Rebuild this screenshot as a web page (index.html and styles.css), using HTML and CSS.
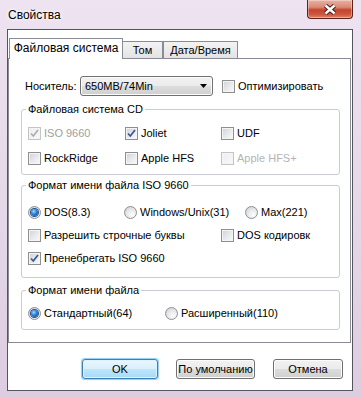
FILE: index.html
```html
<!DOCTYPE html>
<html lang="ru">
<head>
  <meta charset="UTF-8">
  <title>Свойства</title>
  <link rel="stylesheet" href="styles.css">
</head>
<body>

  <!-- Заголовок окна -->
  <div class="titlebar">
    <span class="title">Свойства</span>
    <div class="close">
      <svg width="14" height="11" viewBox="0 0 14 11">
        <path d="M2.5 1.5 L11.5 9.5 M11.5 1.5 L2.5 9.5" stroke="#4a1712" stroke-width="4.4"/>
        <path d="M2.5 1.5 L11.5 9.5 M11.5 1.5 L2.5 9.5" stroke="#fff" stroke-width="2.4"/>
      </svg>
    </div>
  </div>

  <div class="client">
    <!-- Вкладки -->
    <div class="tabs">
      <div class="tab active">Файловая система</div>
      <div class="tab tom">Том</div>
      <div class="tab date">Дата/Время</div>
    </div>

    <div class="page">
      <div class="media">
        <span class="media-label">Носитель:</span>
        <div class="combo">
          <span>650MB/74Min</span>
          <svg class="arrow" width="7" height="4" viewBox="0 0 7 4"><path d="M0 0h7L3.5 4z" fill="#000"/></svg>
        </div>
        <label class="opt"><span class="box"></span>Оптимизировать</label>
      </div>

      <fieldset class="group cd">
        <legend>Файловая система CD</legend>
        <div class="row cols-cd">
          <label class="opt disabled"><span class="box"><svg width="9" height="9" viewBox="0 0 9 9"><path d="M1 4.5l2.3 2.5L8 1" fill="none" stroke="#a9adb3" stroke-width="1.7"/></svg></span>ISO 9660</label>
          <label class="opt"><span class="box"><svg width="9" height="9" viewBox="0 0 9 9"><path d="M1 4.5l2.3 2.5L8 1" fill="none" stroke="#3a5596" stroke-width="1.7"/></svg></span>Joliet</label>
          <label class="opt"><span class="box"></span>UDF</label>
        </div>
        <div class="row cols-cd">
          <label class="opt"><span class="box"></span>RockRidge</label>
          <label class="opt"><span class="box"></span>Apple HFS</label>
          <label class="opt disabled light"><span class="box"></span>Apple HFS+</label>
        </div>
      </fieldset>

      <fieldset class="group iso">
        <legend>Формат имени файла ISO 9660</legend>
        <div class="row cols-iso">
          <label class="opt"><span class="radio"><span class="dot"></span></span>DOS(8.3)</label>
          <label class="opt"><span class="radio"></span>Windows/Unix(31)</label>
          <label class="opt"><span class="radio"></span>Max(221)</label>
        </div>
        <div class="row cols-flags">
          <label class="opt"><span class="box"></span>Разрешить строчные буквы</label>
          <label class="opt"><span class="box"></span>DOS кодировк</label>
        </div>
        <div class="row">
          <label class="opt"><span class="box"><svg width="9" height="9" viewBox="0 0 9 9"><path d="M1 4.5l2.3 2.5L8 1" fill="none" stroke="#3a5596" stroke-width="1.7"/></svg></span>Пренебрегать ISO 9660</label>
        </div>
      </fieldset>

      <fieldset class="group names">
        <legend>Формат имени файла</legend>
        <div class="row cols-names">
          <label class="opt"><span class="radio"><span class="dot"></span></span>Стандартный(64)</label>
          <label class="opt"><span class="radio"></span>Расширенный(110)</label>
        </div>
      </fieldset>
    </div>

    <!-- Кнопки диалога -->
    <div class="buttons">
      <button class="btn default ok">OK</button>
      <button class="btn reset">По умолчанию</button>
      <button class="btn cancel">Отмена</button>
    </div>
  </div>

</body>
</html>
```

FILE: styles.css
```css
* {
  box-sizing: border-box;
}

body {
  margin: 0;
  width: 361px;
  height: 398px;
  overflow: hidden;
  font-family: "Liberation Sans", Arial, sans-serif;
  font-size: 11px;
  color: #000;
  background: linear-gradient(180deg, #eee3f0 0%, #e7dbea 40%, #dccde0 100%);
}

/* ---- заголовок ---- */

.titlebar {
  display: flex;
  align-items: flex-start;
  height: 29px;
  padding-left: 8px;
}

.title {
  margin-top: 7px;
  font-size: 12px;
  line-height: 16px;
  text-shadow: 0 0 5px #fff, 0 0 3px #fff;
}

.close {
  margin-left: auto;
  margin-right: 8px;
  width: 46px;
  height: 19px;
  display: flex;
  align-items: center;
  justify-content: center;
  border: 1px solid #5b2220;
  border-top: none;
  border-radius: 0 0 4px 4px;
  background: linear-gradient(180deg, #eab0a2 0%, #d98a77 40%, #c4452d 55%, #cc563c 80%, #e2866a 100%);
  box-shadow: inset 0 0 0 1px rgba(255, 255, 255, 0.35);
}

/* ---- клиентская область ---- */

.client {
  margin: 0 8px 0 7px;
  height: 362px;
  border: 1px solid #56545e;
  background: #fff;
  padding: 8px 1px 0 0;
}

.tabs {
  display: flex;
  align-items: flex-end;
  height: 20px;
  margin-left: 1px;
  position: relative;
  z-index: 1;
}

.tab {
  height: 17px;
  padding-top: 1px;
  line-height: 15px;
  text-align: center;
  white-space: nowrap;
  border: 1px solid #898c95;
  border-bottom: none;
  background: linear-gradient(180deg, #f3f3f3, #e3e3e3);
}

.tab.active {
  width: 114px;
  height: 21px;
  margin-bottom: -1px;
  padding-top: 2px;
  font-size: 12px;
  background: #fff;
}

.tab.tom {
  width: 41px;
  margin-left: -1px;
}

.tab.date {
  width: 75px;
}

.page {
  height: 285px;
  border: 1px solid #898c95;
  background: #fff;
  padding: 17px 0 0 12px;
}

.media {
  display: flex;
  align-items: center;
  height: 20px;
  padding-left: 4px;
}

.media-label {
  width: 55px;
}

.combo {
  width: 133px;
  height: 20px;
  display: flex;
  align-items: center;
  padding: 0 5px 0 4px;
  border: 1px solid #707070;
  border-radius: 3px;
  background: linear-gradient(180deg, #f2f2f2 0%, #ebebeb 50%, #dddddd 50%, #cfcfcf 100%);
  box-shadow: inset 0 0 0 1px #fcfcfc;
}

.combo .arrow {
  margin-left: auto;
}

.media .opt {
  margin-left: 9px;
}

/* ---- группы ---- */

.group {
  width: 319px;
  min-width: 0;
  margin: 6px 0 0;
  padding: 9px 6px 8px;
  border: 1px solid #c9ccd2;
  border-radius: 3px;
}

.group legend {
  margin-left: -2px;
  padding: 0 2px;
  line-height: 14px;
}

.group.iso {
  margin-top: 3px;
  padding: 12px 6px 11px;
}

.group.names {
  margin-top: 5px;
  padding: 8px 6px 8px;
}

.row {
  display: grid;
  height: 16px;
  align-items: center;
}

.cd .row + .row {
  margin-top: 9px;
}

.iso .row + .row {
  margin-top: 7px;
}

.cols-cd {
  grid-template-columns: 97px 96px auto;
}

.cols-iso {
  grid-template-columns: 96px 121px auto;
}

.cols-flags {
  grid-template-columns: 193px auto;
}

.cols-names {
  grid-template-columns: 137px auto;
}

.opt {
  display: flex;
  align-items: center;
  white-space: nowrap;
}

.box {
  flex: none;
  width: 13px;
  height: 13px;
  margin-right: 3px;
  display: flex;
  align-items: center;
  justify-content: center;
  border: 1px solid #8e8f8f;
  background: linear-gradient(135deg, #cdd1d6 0%, #e9eaec 55%, #fafafa 100%);
  box-shadow: inset 0 0 0 1px #f4f4f4;
}

.radio {
  flex: none;
  width: 13px;
  height: 13px;
  margin-right: 3px;
  display: flex;
  align-items: center;
  justify-content: center;
  border: 1px solid #8e8f8f;
  border-radius: 50%;
  background: radial-gradient(circle at 65% 70%, #fdfdfd 0%, #e6e7e9 50%, #c9ccd0 100%);
}

.dot {
  width: 7px;
  height: 7px;
  border-radius: 50%;
  background: radial-gradient(circle at 40% 35%, #a6dcff 0%, #2a7fd4 45%, #0c3f86 100%);
  box-shadow: 0 0 0 1px #1b4f94;
}

.opt.disabled {
  color: #a0a0a0;
}

.opt.disabled .box {
  border-color: #c2c4c6;
  background: linear-gradient(135deg, #eeeeee, #f8f8f8);
}

.opt.light {
  color: #b4b4b4;
}

/* ---- кнопки ---- */

.buttons {
  display: flex;
  justify-content: flex-end;
  gap: 18px;
  margin-top: 16px;
  padding-right: 8px;
}

.btn {
  height: 20px;
  padding: 0;
  font: inherit;
  line-height: 18px;
  white-space: nowrap;
  color: #000;
  border: 1px solid #707070;
  border-radius: 3px;
  background: linear-gradient(180deg, #f2f2f2 0%, #ebebeb 50%, #dddddd 50%, #cfcfcf 100%);
  box-shadow: inset 0 0 0 1px #fcfcfc;
}

.btn.default {
  border-color: #3c7fb1;
  background: linear-gradient(180deg, #eaf6fd 0%, #d9f0fc 50%, #bee6fd 50%, #a7d9f5 100%);
  box-shadow: inset 0 0 0 1px #dff3ff, 0 0 1px 1px #90cdf6;
}

.ok {
  width: 76px;
}

.reset {
  width: 79px;
}

.cancel {
  width: 70px;
}
```
